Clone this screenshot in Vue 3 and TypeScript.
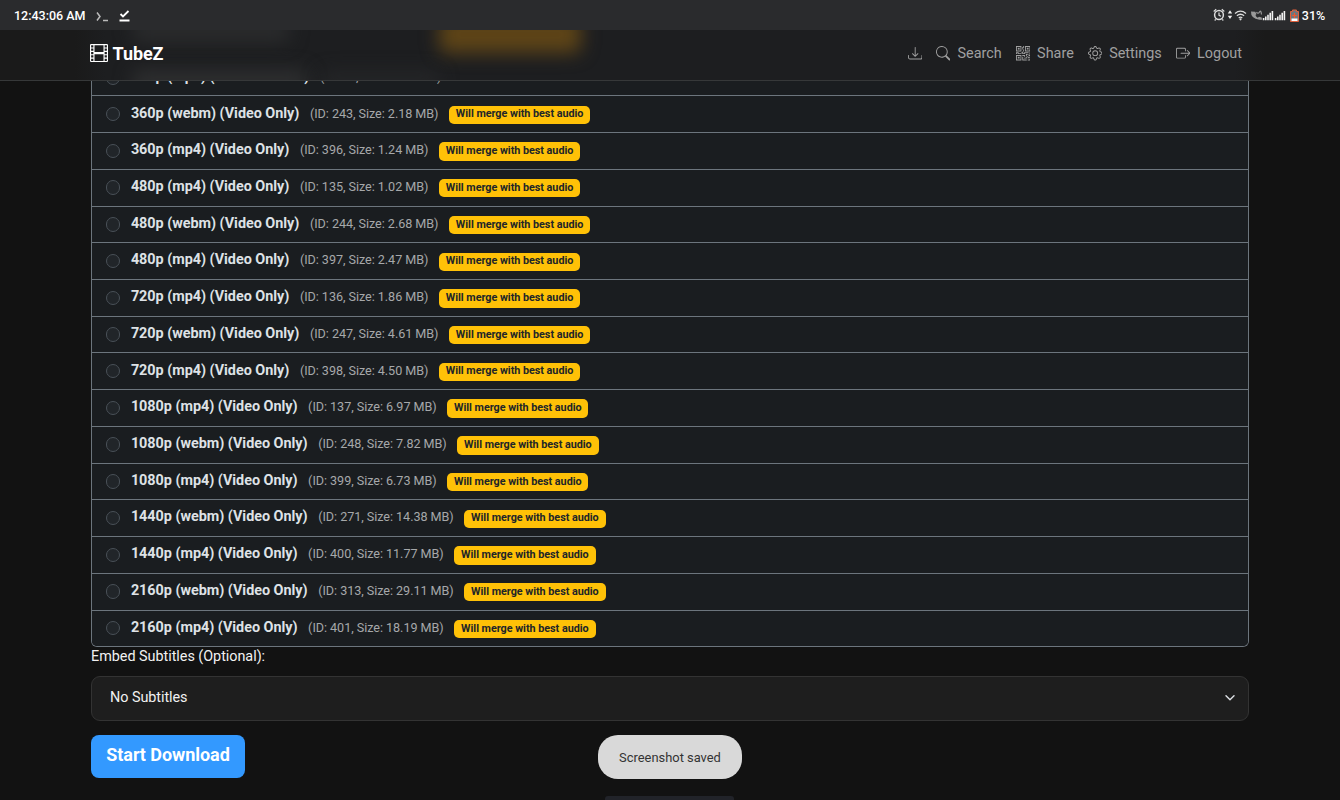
<script setup lang="ts">
interface Format {
  name: string
  id: string
  size: string
  merge: boolean
}

const f = (name: string, id: string, size: string, merge = true): Format => ({ name, id, size, merge })

const formats: Format[] = [
  f('360p (mp4) (Video + Audio)', '18', '2.36 MB', false),
  f('360p (webm) (Video Only)', '243', '2.18 MB'),
  f('360p (mp4) (Video Only)', '396', '1.24 MB'),
  f('480p (mp4) (Video Only)', '135', '1.02 MB'),
  f('480p (webm) (Video Only)', '244', '2.68 MB'),
  f('480p (mp4) (Video Only)', '397', '2.47 MB'),
  f('720p (mp4) (Video Only)', '136', '1.86 MB'),
  f('720p (webm) (Video Only)', '247', '4.61 MB'),
  f('720p (mp4) (Video Only)', '398', '4.50 MB'),
  f('1080p (mp4) (Video Only)', '137', '6.97 MB'),
  f('1080p (webm) (Video Only)', '248', '7.82 MB'),
  f('1080p (mp4) (Video Only)', '399', '6.73 MB'),
  f('1440p (webm) (Video Only)', '271', '14.38 MB'),
  f('1440p (mp4) (Video Only)', '400', '11.77 MB'),
  f('2160p (webm) (Video Only)', '313', '29.11 MB'),
  f('2160p (mp4) (Video Only)', '401', '18.19 MB'),
]
</script>

<template>
  <div class="screen">
    <header class="status">
      <span class="clock">12:43:06 AM</span>
      <svg class="term" width="13" height="12" viewBox="0 0 13 12" fill="none" stroke="#bbb" stroke-width="1.5"><path d="M1 1.5 4 5.5 1 9.5M7 9.5h5" /></svg>
      <svg class="done" width="11" height="12" viewBox="0 0 11 12" fill="none" stroke="#fff"><path d="M1.5 4 4 6.5 9.5 1" stroke-width="1.8" /><path d="M.5 10.5h10" stroke-width="2" /></svg>
      <span class="grow"></span>
      <svg class="tray" width="88" height="16" viewBox="0 0 88 16" fill="none" stroke="#ddd">
        <circle cx="6" cy="8" r="4.4" stroke-width="1.5" />
        <path d="M6 5.5V8.3l2 1M.7 4.5 3.200 2.300M11.300 4.500 8.800 2.300M2.700 12.300l-1 1.200M9.300 12.300l1 1.200" stroke-width="1.200" />
        <path d="M17 3.2l2.200 3.300h-4.400zM17 12l2.200-3.300h-4.400z" fill="#eee" stroke="none" />
        <path d="M22 6.400q5.500-4.600 11 0M23.900 8.700q3.600-2.900 7.200 0M25.700 10.900q1.800-1.400 3.600 0" stroke-width="1.300" />
        <circle cx="27.500" cy="12.300" r="1.100" fill="#ddd" stroke="none" />
        <path d="M38 4.500q-.5 7 8.500 8.200h2.500l-.3-2.200-2.700-.8-1.300 1q-2-1-2.200-2.600l1-1-1.300-2.400z" fill="#999" stroke="none" />
        <path d="M43.500 5q1.500 2.500 3 0t2 2.500" stroke="#999" stroke-width="1.200" />
        <g fill="#f2f2f2" stroke="none">
          <path d="M49.800 11h1.600v2.200h-1.600zM52 9.500h1.600v3.700H52zM54.200 7.800h1.600v5.400h-1.600zM56.400 5.800H58v7.400h-1.600zM58.600 4h1.600v9.200h-1.600z" />
          <path d="M61.800 11h1.600v2.200h-1.600zM64 9.500h1.600v3.700H64zM66.200 7.800h1.600v5.400h-1.600zM68.400 5.800H70v7.400h-1.600zM70.600 4h1.600v9.200h-1.600z" />
        </g>
        <path d="M79.500 3h4v1.500h2v10h-8v-10h2z" fill="#70757a" stroke="#e0603c" />
        <path d="M78.500 11.500h6V14h-6z" fill="#fff" stroke="none" />
        <path d="M81.500 6v5M79.200 8.500h4.600" stroke="#f0562c" stroke-width="1.200" />
      </svg>
      <span class="percent">31%</span>
    </header>

    <nav class="nav">
      <div class="glows">
        <i class="glow amber"></i>
        <i class="glow upper"></i>
        <i class="glow lower"></i>
        <i class="glow meta-glow"></i>
      </div>
      <div class="brand">
        <svg width="18" height="18" viewBox="0 0 16 16" fill="currentColor"><path d="M0 1a1 1 0 0 1 1-1h14a1 1 0 0 1 1 1v14a1 1 0 0 1-1 1H1a1 1 0 0 1-1-1zm4 0v6h8V1zm8 8H4v6h8zM1 1v2h2V1zm2 3H1v2h2zM1 7v2h2V7zm2 3H1v2h2zm-2 3v2h2v-2zM15 1h-2v2h2zm-2 3v2h2V4zm2 3h-2v2h2zm-2 3v2h2v-2zm2 3h-2v2h2z" /></svg>
        <span>TubeZ</span>
      </div>
      <div class="links">
        <a><svg viewBox="0 0 16 16"><path d="M.5 9.9a.5.5 0 0 1 .5.5v2.5a1 1 0 0 0 1 1h12a1 1 0 0 0 1-1v-2.5a.5.5 0 0 1 1 0v2.5a2 2 0 0 1-2 2H2a2 2 0 0 1-2-2v-2.5a.5.5 0 0 1 .5-.5" /><path d="M7.646 11.854a.5.5 0 0 0 .708 0l3-3a.5.5 0 0 0-.708-.708L8.5 10.293V1.500a.5.5 0 0 0-1 0v8.793L5.354 8.146a.5.5 0 1 0-.708.708z" /></svg></a>
        <a><svg viewBox="0 0 16 16"><path d="M11.742 10.344a6.5 6.5 0 1 0-1.397 1.398h-.001q.044.06.098.115l3.85 3.85a1 1 0 0 0 1.415-1.414l-3.85-3.85a1 1 0 0 0-.115-.1zM12 6.500a5.500 5.500 0 1 1-11 0 5.500 5.500 0 0 1 11 0" /></svg>Search</a>
        <a><svg viewBox="0 0 16 16"><path d="M2 2h2v2H2z" /><path d="M6 0v6H0V0zM5 1H1v4h4zM4 12H2v2h2z" /><path d="M6 10v6H0v-6zm-5 1v4h4v-4zm11-9h2v2h-2z" /><path d="M10 0v6h6V0zm5 1v4h-4V1zM8 1V0h1v2H8v2H7V1zm0 5V4h1v2zM6 8V7h1V6h1v2h1V7h5v1h-4v1H7V8zm0 0v1H2V8H1v1H0V7h3v1zm10 1h-1V7h1zm-1 0h-1v2h2v-1h-1zm-4 0h2v1h-1v1h-1zm2 3v-1h-1v1h-1v1H9v1h3v-2zm0 0h3v1h-2v1h-1zm-4-1v1h1v-2H7v1z" /><path d="M7 12h1v3h4v1H7zm9 2v2h-3v-1h2v-1z" /></svg>Share</a>
        <a><svg viewBox="0 0 16 16"><path d="M8 4.754a3.246 3.246 0 1 0 0 6.492 3.246 3.246 0 0 0 0-6.492M5.754 8a2.246 2.246 0 1 1 4.492 0 2.246 2.246 0 0 1-4.492 0" /><path d="M9.796 1.343c-.527-1.790-3.065-1.790-3.592 0l-.094.319a.873.873 0 0 1-1.255.520l-.292-.160c-1.640-.892-3.433.902-2.540 2.541l.159.292a.873.873 0 0 1-.520 1.255l-.319.094c-1.790.527-1.790 3.065 0 3.592l.319.094a.873.873 0 0 1 .520 1.255l-.160.292c-.892 1.640.901 3.434 2.541 2.540l.292-.159a.873.873 0 0 1 1.255.520l.094.319c.527 1.790 3.065 1.790 3.592 0l.094-.319a.873.873 0 0 1 1.255-.520l.292.160c1.640.893 3.434-.902 2.540-2.541l-.159-.292a.873.873 0 0 1 .520-1.255l.319-.094c1.790-.527 1.790-3.065 0-3.592l-.319-.094a.873.873 0 0 1-.520-1.255l.160-.292c.893-1.640-.902-3.433-2.541-2.540l-.292.159a.873.873 0 0 1-1.255-.520zm-2.633.283c.246-.835 1.428-.835 1.674 0l.094.319a1.873 1.873 0 0 0 2.693 1.115l.291-.160c.764-.415 1.600.420 1.184 1.185l-.159.292a1.873 1.873 0 0 0 1.116 2.692l.318.094c.835.246.835 1.428 0 1.674l-.319.094a1.873 1.873 0 0 0-1.115 2.693l.160.291c.415.764-.420 1.600-1.185 1.184l-.291-.159a1.873 1.873 0 0 0-2.693 1.116l-.094.318c-.246.835-1.428.835-1.674 0l-.094-.319a1.873 1.873 0 0 0-2.692-1.115l-.292.160c-.764.415-1.600-.420-1.184-1.185l.159-.291A1.873 1.873 0 0 0 1.945 8.930l-.319-.094c-.835-.246-.835-1.428 0-1.674l.319-.094A1.873 1.873 0 0 0 3.060 4.377l-.160-.292c-.415-.764.420-1.600 1.185-1.184l.292.159a1.873 1.873 0 0 0 2.692-1.115z" /></svg>Settings</a>
        <a><svg viewBox="0 0 16 16"><path fill-rule="evenodd" d="M10 12.500a.5.5 0 0 1-.5.5h-8a.5.5 0 0 1-.5-.5v-9a.5.5 0 0 1 .5-.5h8a.5.5 0 0 1 .5.5v2a.5.5 0 0 0 1 0v-2A1.500 1.500 0 0 0 9.500 2h-8A1.500 1.500 0 0 0 0 3.500v9A1.500 1.500 0 0 0 1.500 14h8a1.500 1.500 0 0 0 1.500-1.500v-2a.5.5 0 0 0-1 0z" /><path fill-rule="evenodd" d="M15.854 8.354a.5.5 0 0 0 0-.708l-3-3a.5.5 0 0 0-.708.708L14.293 7.500H5.500a.5.5 0 0 0 0 1h8.793l-2.147 2.146a.5.5 0 0 0 .708.708z" /></svg>Logout</a>
      </div>
    </nav>

    <main class="content">
      <ul class="list">
        <li v-for="item in formats" :key="item.id" class="row">
          <span class="radio"></span>
          <strong class="name">{{ item.name }}</strong>
          <span class="meta">(ID: {{ item.id }}, Size: {{ item.size }})</span>
          <span v-if="item.merge" class="badge">Will merge with best audio</span>
        </li>
      </ul>
      <div class="label">Embed Subtitles (Optional):</div>
      <div class="select">
        <span>No Subtitles</span>
        <svg width="10" height="6" viewBox="0 0 10 6" fill="none" stroke="#dee2e6" stroke-width="1.4" stroke-linecap="round" stroke-linejoin="round"><path d="M1 .8 5 4.800 9 .8" /></svg>
      </div>
      <button class="start">Start Download</button>
    </main>

    <div class="toast">Screenshot saved</div>
    <div class="handle"></div>
  </div>
</template>

<style>
body {
  margin: 0;
  background: #121212;
}
</style>

<style scoped>
.screen {
  position: relative;
  width: 1340px;
  height: 800px;
  overflow: hidden;
  background: #121212;
  color: #f1f1f1;
  font-family: Roboto, sans-serif;
  font-size: 14.4px;
}
.status {
  height: 30px;
  padding: 1px 14px 0;
  box-sizing: border-box;
  display: flex;
  align-items: center;
  background: #2a2b2d;
  color: #fff;
  font-size: 12.5px;
  font-weight: 500;
}
.term { margin: 2px 0 0 10px; }
.done { margin-left: 10px; }
.grow { flex: 1; }
.tray { margin-bottom: 2px; }
.percent {
  margin-left: 1px;
  padding-right: 0.8px;
}
.nav {
  position: relative;
  z-index: 2;
  height: 51px;
  box-sizing: border-box;
  padding: 0 98px 4px 90px;
  display: flex;
  align-items: center;
  justify-content: space-between;
  background: linear-gradient(90deg, #1a1a1a 75px, #1d1e20 105px, #1d1e20 1235px, #1a1a1a 1265px);
  border-bottom: 1px solid #363839;
}
.glows {
  position: absolute;
  inset: 0;
  overflow: hidden;
}
.glow {
  position: absolute;
  border-radius: 8px;
  filter: blur(9px);
}
.amber {
  left: 439px;
  top: -14px;
  width: 142px;
  height: 37px;
  background: #5e4417;
}
.upper {
  left: 132px;
  top: -10px;
  width: 158px;
  height: 22px;
  background: #2b2c2d;
}
.lower {
  left: 132px;
  top: 40px;
  width: 176px;
  height: 22px;
  background: #2e2f30;
}
.meta-glow {
  left: 320px;
  top: 42px;
  width: 120px;
  height: 18px;
  background: #252628;
}
.brand {
  position: relative;
  display: flex;
  align-items: center;
  gap: 4.5px;
  font-size: 18px;
  font-weight: 700;
  letter-spacing: -0.1px;
  color: #fff;
}
.brand span { padding-top: 1px; }
.links {
  position: relative;
  display: flex;
  gap: 14px;
  padding-top: 1px;
  color: #a0a0a0;
}
.links a {
  display: flex;
  align-items: center;
  gap: 7px;
}
.links svg {
  width: 14.4px;
  height: 14.4px;
  fill: currentColor;
}
.content { padding: 0 91px; }
.list {
  margin: 0;
  padding: 0;
  list-style: none;
  border: 1px solid #6c757d;
  border-top: 0;
  border-radius: 0 0 6px 6px;
  overflow: hidden;
}
.row {
  height: 36.72px;
  box-sizing: border-box;
  padding: 0 14px 2.5px;
  display: flex;
  align-items: center;
  border-top: 1px solid #6c757d;
  background: #1a1d20;
}
.row:first-child { margin-top: -22.27px; }
.radio {
  width: 14.4px;
  height: 14.4px;
  margin-top: 2.2px;
  box-sizing: border-box;
  border: 1px solid #495057;
  border-radius: 50%;
  background: #212529;
}
.name {
  margin-left: 10.5px;
  font-weight: 700;
  letter-spacing: -0.025px;
  color: #dee2e6;
}
.meta {
  margin-left: 10.6px;
  font-size: 12.6px;
  letter-spacing: -0.04px;
  color: #a6a8aa;
}
.badge {
  margin: 3.6px 0 0 10.5px;
  padding: 3.8px 6.9px;
  border-radius: 5px;
  background: #ffc107;
  color: #212529;
  font-size: 10.8px;
  line-height: 10.8px;
  letter-spacing: -0.025px;
  font-weight: 700;
}
.label {
  height: 29px;
  line-height: 19px;
  letter-spacing: -0.03px;
}
.select {
  height: 45px;
  box-sizing: border-box;
  padding: 0 13px 1px 18px;
  display: flex;
  align-items: center;
  justify-content: space-between;
  border: 1px solid #333;
  border-radius: 9px;
  background: #1e1e1e;
}
.select span {
  padding-bottom: 2px;
  letter-spacing: -0.05px;
}
.start {
  display: block;
  width: 154px;
  height: 43px;
  margin-top: 14px;
  padding: 0 0 5px;
  border: 0;
  border-radius: 8px;
  background: #3399ff;
  color: #fff;
  font: 700 18px Roboto, sans-serif;
  letter-spacing: -0.05px;
}
.toast {
  position: absolute;
  left: 598px;
  top: 735px;
  width: 144px;
  height: 44px;
  border-radius: 20px;
  background: #d9d9d9;
  color: #333;
  font-size: 12.9px;
  line-height: 45px;
  text-align: center;
}
.handle {
  position: absolute;
  left: 605px;
  top: 796px;
  width: 129px;
  height: 8px;
  border-radius: 3px;
  background: #212329;
}
</style>
